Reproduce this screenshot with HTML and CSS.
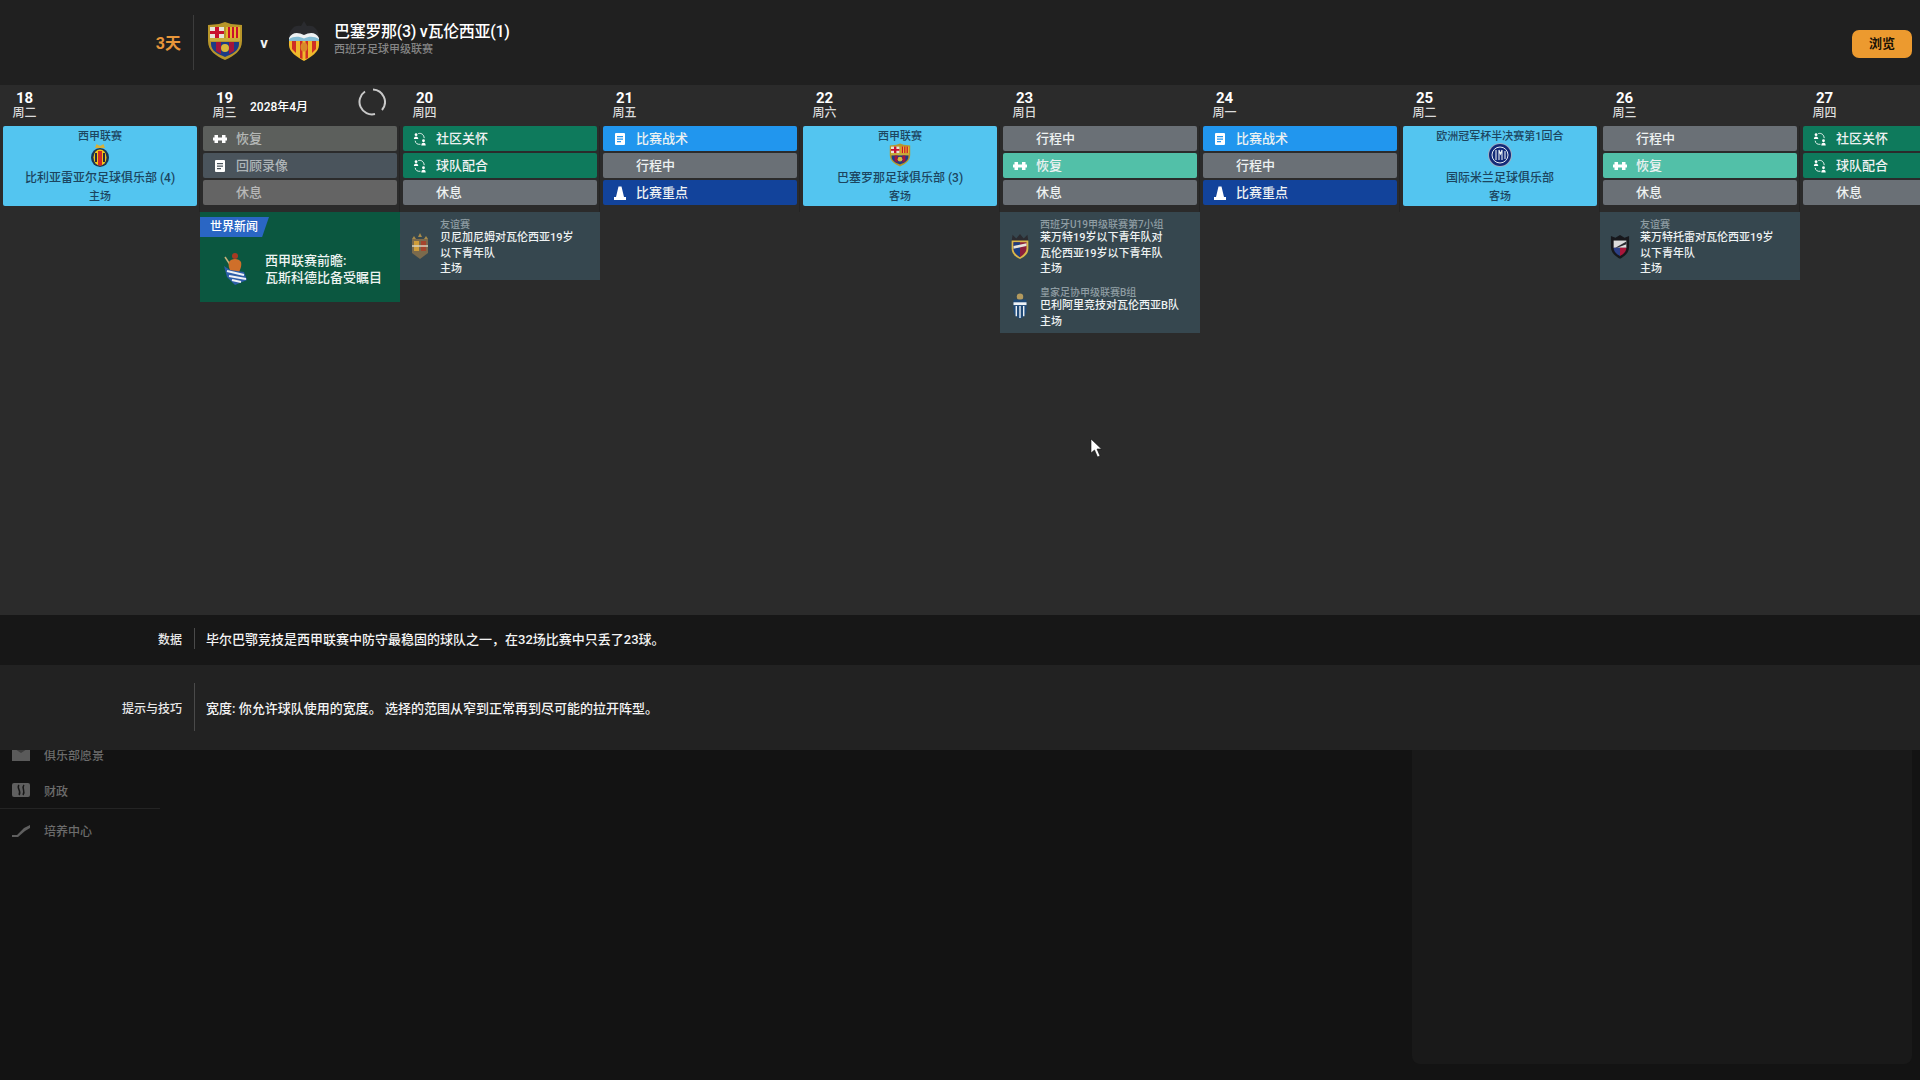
FILE: index.html
```html
<!DOCTYPE html>
<html lang="zh-CN">

<head>
	<meta charset="UTF-8">
	<title>日程</title>
	<link rel="stylesheet" href="styles.css">
</head>

<body>
	<svg class="sprite" xmlns="http://www.w3.org/2000/svg">
		<symbol id="barca" viewBox="0 0 36 40">
			<path d="M1 4 L12 3 L18 1 L24 3 L35 4 L35 20 C35 30 27 35 18 39 C9 35 1 30 1 20 Z" fill="#b8962a" />
			<path d="M3 6 H17 V17 H3 Z" fill="#e8e4da" />
			<path d="M8 6 H12 V17 H8 Z M3 10 H17 V13 H3 Z" fill="#c8102e" />
			<path d="M19 6 H33 V17 H19 Z" fill="#e7b62c" />
			<path d="M21 6 H23 V17 H21 Z M25 6 H27 V17 H25 Z M29 6 H31 V17 H29 Z" fill="#c8102e" />
			<path d="M3 17 H33 V20 H3 Z" fill="#c9ad3c" />
			<path d="M4 21 H32 V23 C32 30 25 33 18 36 C11 33 4 30 4 23 Z" fill="#1d3b85" />
			<path d="M9 21 H14 V33 L9 30 Z M22 21 H27 V30 L22 33 Z" fill="#a3143c" />
			<circle cx="18" cy="27" r="4" fill="#d9b93a" />
		</symbol>
		<symbol id="valencia" viewBox="0 0 32 40">
			<path d="M16 0 L13 5 C9 4 6 5 4 8 C2 10 1 13 1 17 H31 C31 13 30 10 28 8 C26 5 23 4 19 5 Z" fill="#2a2b2f" />
			<path d="M1 17 C4 11 10 11 16 14 C22 11 28 11 31 17 L31 19 H1 Z" fill="#eef1f3" />
			<path d="M1 18 C6 15 11 15 16 17.500 C21 15 26 15 31 18 L31 20 H1 Z" fill="#84bcd4" />
			<path d="M1 20 H31 V24 C31 31 23 36 16 40 C9 36 1 31 1 24 Z" fill="#f0b92c" />
			<path d="M4 20 H8 V32 L4 28 Z M12 20 H14.500 V38 L12 37 Z M17.500 20 H20 V37 L17.500 38 Z M24 20 H28 V28 L24 32 Z" fill="#cf2f25" />
			<ellipse cx="16" cy="26" rx="3.500" ry="4.500" fill="#d98a2b" />
		</symbol>
		<symbol id="villarreal" viewBox="0 0 18 24">
			<path d="M4 5 L5.500 1 L9 3 L12.500 1 L14 5 Z" fill="#d8b23a" />
			<ellipse cx="9" cy="14.500" rx="9" ry="9.500" fill="#1c3552" />
			<ellipse cx="9" cy="14.500" rx="6.500" ry="8" fill="#f2c418" />
			<path d="M7 8 H11 V22 L9 23 L7 22 Z" fill="#cf2a27" />
			<path d="M4 10 H6 V19 H4 Z M12 10 H14 V19 H12 Z" fill="#2a2a3e" />
		</symbol>
		<symbol id="inter" viewBox="0 0 24 24">
			<circle cx="12" cy="12" r="12" fill="#9fb0c4" />
			<circle cx="12" cy="12" r="11" fill="#142a78" />
			<circle cx="12" cy="12" r="8" fill="none" stroke="#e8edf4" stroke-width="1" />
			<path d="M8 7 V17 M11 7 V17 M14 7 V17 M17 8 V16 M11 7 L12.500 11 L14 7" fill="none" stroke="#e8edf4" stroke-width="1.100" />
		</symbol>
		<symbol id="sociedad" viewBox="0 0 26 34">
			<path d="M3 5 L19 29" stroke="#c9b27a" stroke-width="1.500" />
			<circle cx="13" cy="4" r="3" fill="#a63a22" />
			<path d="M7 10 C9 6 17 6 19 10 C20 14 18 18 17 20 H9 C7 17 6 13 7 10 Z" fill="#cf6f2a" />
			<path d="M2 14 L8 18 L22 20 L25 28 L13 33 L5 25 Z" fill="#2d5ea8" />
			<path d="M5 19 L22 23 M7 24 L24 27 M10 28 L19 30" stroke="#eef2f6" stroke-width="2" fill="none" />
		</symbol>
		<symbol id="ontinyent" viewBox="0 0 20 26">
			<path d="M10 0 L12 4 H8 Z M4 3 L6 6 H2 Z M16 3 L18 6 H14 Z" fill="#a88b4a" />
			<path d="M2 6 H18 V20 L10 26 L2 20 Z" fill="#7b6a4c" />
			<path d="M4 8 H9 V18 H4 Z" fill="#cf9d3a" />
			<path d="M11 8 H16 V18 H11 Z" fill="#a5452d" />
			<path d="M2 13 H18" stroke="#d9d2bd" stroke-width="1.500" />
		</symbol>
		<symbol id="levante" viewBox="0 0 20 28">
			<path d="M2 2 L6 6 L10 1 L14 6 L18 2 L19 9 H1 Z" fill="#2b2b30" />
			<path d="M1 8 H19 V17 C19 23 14 26 10 28 C6 26 1 23 1 17 Z" fill="#d9b84a" />
			<path d="M3 10 H17 V17 C17 21 13 24 10 26 C7 24 3 21 3 17 Z" fill="#8c1f3c" />
			<path d="M3 10 H10 V26 C7 24 3 21 3 17 Z" fill="#1c3e7e" />
			<path d="M3 14 L17 11 V14 L3 17 Z" fill="#e8e4da" />
		</symbol>
		<symbol id="baleares" viewBox="0 0 16 28">
			<circle cx="8" cy="4" r="3.500" fill="#b39a5e" />
			<path d="M1 7 H15 V19 C15 24 11 26 8 28 C5 26 1 24 1 19 Z" fill="#1f4a78" />
			<path d="M1 10 H15 V13 H1 Z" fill="#eef2f6" />
			<path d="M4 14 V25 M8 14 V27 M12 14 V25" stroke="#eef2f6" stroke-width="1.500" />
		</symbol>
		<symbol id="huesca" viewBox="0 0 22 28">
			<path d="M1 3 L6 5 L11 2 L16 5 L21 3 V15 C21 22 15 26 11 28 C7 26 1 22 1 15 Z" fill="#17181c" />
			<path d="M4 8 H18 V16 H4 Z" fill="#dcdcdc" />
			<path d="M6 16 L18 9 V12 L8 16 Z" fill="#2a2a30" />
			<path d="M4 16 H11 V25 C7 23 4 20 4 16 Z" fill="#2c3f86" />
			<path d="M11 16 H18 C18 20 15 23 11 25 Z" fill="#a8163a" />
		</symbol>
		<symbol id="ic-rest" viewBox="0 0 14 14">
			<path d="M0 5.500 H1.500 V3 H5 V5.500 H9 V3 H12.500 V5.500 H14 V8.500 H12.500 V11 H9 V8.500 H5 V11 H1.500 V8.500 H0 Z" fill="currentColor" />
		</symbol>
		<symbol id="ic-doc" viewBox="0 0 14 14">
			<path fill-rule="evenodd" d="M3 1 H11 A1 1 0 0 1 12 2 V12 A1 1 0 0 1 11 13 H3 A1 1 0 0 1 2 12 V2 A1 1 0 0 1 3 1 Z M4 4 V5.200 H10 V4 Z M4 6.500 V7.700 H10 V6.500 Z M4 9 V10.200 H8 V9 Z" fill="currentColor" />
		</symbol>
		<symbol id="ic-cone" viewBox="0 0 14 14">
			<path d="M5.500 0.500 H8.500 L11 11 H13 V14 H1 V11 H3 Z" fill="currentColor" />
		</symbol>
		<symbol id="ic-team" viewBox="0 0 16 16">
			<circle cx="3.500" cy="3" r="1.600" fill="currentColor" />
			<path d="M1 8 C1 6 2 5 3.500 5 C5 5 6 6 6 8 Z" fill="currentColor" />
			<circle cx="12" cy="10" r="1.600" fill="currentColor" />
			<path d="M9.500 15.500 C9.500 13 10.500 12.300 12 12.300 C13.500 12.300 14.500 13 14.500 15.500 Z" fill="currentColor" />
			<path d="M6 1.800 C9.500 0.800 12.500 3 12.800 7 M8.500 14 C5 14.500 2.800 13 2.500 10" fill="none" stroke="currentColor" stroke-width="1" />
		</symbol>
	</svg>

	<header class="topbar">
		<span class="countdown">3天</span>
		<div class="divider"></div>
		<svg class="crest-big crest-barca"><use href="#barca" /></svg>
		<span class="versus">v</span>
		<svg class="crest-big crest-vcf"><use href="#valencia" /></svg>
		<div class="fixture">
			<div class="fixture-name">巴塞罗那(3) v瓦伦西亚(1)</div>
			<div class="fixture-comp">西班牙足球甲级联赛</div>
		</div>
		<button class="browse">浏览</button>
	</header>

	<section class="schedule">
		<div class="day">
			<div class="day-head">
				<div class="date"><b>18</b><span>周二</span></div>
			</div>
			<div class="stack">
				<div class="match">
					<div class="match-comp">西甲联赛</div>
					<svg class="crest-small"><use href="#villarreal" /></svg>
					<div class="match-team">比利亚雷亚尔足球俱乐部 (4)</div>
					<div class="match-venue">主场</div>
				</div>
			</div>
		</div>

		<div class="day">
			<div class="day-head">
				<div class="date"><b>19</b><span>周三</span></div>
				<div class="month">2028年4月</div>
				<svg class="spinner" viewBox="0 0 28 28">
					<path d="M15 1.500 A12.500 12.500 0 0 1 24 22" fill="none" stroke="#c9c9c9" stroke-width="2" />
					<path d="M17 26 A12.500 12.500 0 0 1 7 3.500" fill="none" stroke="#c9c9c9" stroke-width="2" />
				</svg>
			</div>
			<div class="stack">
				<div class="row dim-rest"><svg class="ic"><use href="#ic-rest" /></svg><span>恢复</span></div>
				<div class="row dim-video"><svg class="ic"><use href="#ic-doc" /></svg><span>回顾录像</span></div>
				<div class="row dim-off"><span class="ic"></span><span>休息</span></div>
			</div>
			<div class="news">
				<div class="news-tag">世界新闻</div>
				<div class="news-body">
					<svg class="crest-news"><use href="#sociedad" /></svg>
					<div>西甲联赛前瞻:<br>瓦斯科德比备受瞩目</div>
				</div>
			</div>
		</div>

		<div class="day">
			<div class="day-head">
				<div class="date"><b>20</b><span>周四</span></div>
			</div>
			<div class="stack">
				<div class="row green"><svg class="ic"><use href="#ic-team" /></svg><span>社区关怀</span></div>
				<div class="row green"><svg class="ic"><use href="#ic-team" /></svg><span>球队配合</span></div>
				<div class="row grey"><span class="ic"></span><span>休息</span></div>
			</div>
			<div class="events">
				<div class="event">
					<svg class="crest-ev"><use href="#ontinyent" /></svg>
					<div class="event-text">
						<div class="event-comp">友谊赛</div>
						<div>贝尼加尼姆对瓦伦西亚19岁<br>以下青年队</div>
						<div>主场</div>
					</div>
				</div>
			</div>
		</div>

		<div class="day">
			<div class="day-head">
				<div class="date"><b>21</b><span>周五</span></div>
			</div>
			<div class="stack">
				<div class="row blue"><svg class="ic"><use href="#ic-doc" /></svg><span>比赛战术</span></div>
				<div class="row grey"><span class="ic"></span><span>行程中</span></div>
				<div class="row navy"><svg class="ic"><use href="#ic-cone" /></svg><span>比赛重点</span></div>
			</div>
		</div>

		<div class="day">
			<div class="day-head">
				<div class="date"><b>22</b><span>周六</span></div>
			</div>
			<div class="stack">
				<div class="match">
					<div class="match-comp">西甲联赛</div>
					<svg class="crest-small"><use href="#barca" /></svg>
					<div class="match-team">巴塞罗那足球俱乐部 (3)</div>
					<div class="match-venue">客场</div>
				</div>
			</div>
		</div>

		<div class="day">
			<div class="day-head">
				<div class="date"><b>23</b><span>周日</span></div>
			</div>
			<div class="stack">
				<div class="row grey"><span class="ic"></span><span>行程中</span></div>
				<div class="row teal"><svg class="ic"><use href="#ic-rest" /></svg><span>恢复</span></div>
				<div class="row grey"><span class="ic"></span><span>休息</span></div>
			</div>
			<div class="events">
				<div class="event">
					<svg class="crest-ev"><use href="#levante" /></svg>
					<div class="event-text">
						<div class="event-comp">西班牙U19甲级联赛第7小组</div>
						<div>莱万特19岁以下青年队对<br>瓦伦西亚19岁以下青年队</div>
						<div>主场</div>
					</div>
				</div>
				<div class="event">
					<svg class="crest-ev"><use href="#baleares" /></svg>
					<div class="event-text">
						<div class="event-comp">皇家足协甲级联赛B组</div>
						<div>巴利阿里竞技对瓦伦西亚B队</div>
						<div>主场</div>
					</div>
				</div>
			</div>
		</div>

		<div class="day">
			<div class="day-head">
				<div class="date"><b>24</b><span>周一</span></div>
			</div>
			<div class="stack">
				<div class="row blue"><svg class="ic"><use href="#ic-doc" /></svg><span>比赛战术</span></div>
				<div class="row grey"><span class="ic"></span><span>行程中</span></div>
				<div class="row navy"><svg class="ic"><use href="#ic-cone" /></svg><span>比赛重点</span></div>
			</div>
		</div>

		<div class="day">
			<div class="day-head">
				<div class="date"><b>25</b><span>周二</span></div>
			</div>
			<div class="stack">
				<div class="match">
					<div class="match-comp">欧洲冠军杯半决赛第1回合</div>
					<svg class="crest-small"><use href="#inter" /></svg>
					<div class="match-team">国际米兰足球俱乐部</div>
					<div class="match-venue">客场</div>
				</div>
			</div>
		</div>

		<div class="day">
			<div class="day-head">
				<div class="date"><b>26</b><span>周三</span></div>
			</div>
			<div class="stack">
				<div class="row grey"><span class="ic"></span><span>行程中</span></div>
				<div class="row teal"><svg class="ic"><use href="#ic-rest" /></svg><span>恢复</span></div>
				<div class="row grey"><span class="ic"></span><span>休息</span></div>
			</div>
			<div class="events">
				<div class="event">
					<svg class="crest-ev"><use href="#huesca" /></svg>
					<div class="event-text">
						<div class="event-comp">友谊赛</div>
						<div>莱万特托雷对瓦伦西亚19岁<br>以下青年队</div>
						<div>主场</div>
					</div>
				</div>
			</div>
		</div>

		<div class="day">
			<div class="day-head">
				<div class="date"><b>27</b><span>周四</span></div>
			</div>
			<div class="stack">
				<div class="row green"><svg class="ic"><use href="#ic-team" /></svg><span>社区关怀</span></div>
				<div class="row green"><svg class="ic"><use href="#ic-team" /></svg><span>球队配合</span></div>
				<div class="row grey"><span class="ic"></span><span>休息</span></div>
			</div>
		</div>
	</section>

	<section class="band band-stat">
		<div class="band-label">数据</div>
		<div class="band-text">毕尔巴鄂竞技是西甲联赛中防守最稳固的球队之一，在32场比赛中只丢了23球。</div>
	</section>
	<section class="band band-tip">
		<div class="band-label">提示与技巧</div>
		<div class="band-text">宽度: 你允许球队使用的宽度。 选择的范围从窄到正常再到尽可能的拉开阵型。</div>
	</section>

	<section class="lower">
		<nav class="side">
			<div class="side-item side-cut">
				<svg class="side-ic" viewBox="0 0 18 14"><path d="M0 0 H18 V14 H0 Z" fill="#5a5a5a" /><path d="M0 0 L9 6 L18 0" fill="#3c3c3c" /></svg>
				<span>俱乐部愿景</span>
			</div>
			<div class="side-item">
				<svg class="side-ic" viewBox="0 0 18 14"><rect width="18" height="14" rx="2" fill="#5f5f5f" /><path d="M7 2 C4 5 10 8 7 12 M12 2 C9 5 14 8 11 12" stroke="#161616" stroke-width="1.500" fill="none" /></svg>
				<span>财政</span>
			</div>
			<div class="side-line"></div>
			<div class="side-item">
				<svg class="side-ic" viewBox="0 0 18 14"><path d="M0 12 H5 L12 5 L18 2 V5 L13 8 L6 14 H0 Z" fill="#5f5f5f" /></svg>
				<span>培养中心</span>
			</div>
		</nav>
		<div class="panel"></div>
	</section>

	<svg class="cursor" viewBox="0 0 12 20"><path d="M1 1 V15 L4.500 12 L7.500 19 L10 18 L7 11 L11.500 11 Z" fill="#fff" stroke="#111" stroke-width="0.600" /></svg>
</body>

</html>
```

FILE: styles.css
```css
* {
	box-sizing: border-box;
}

body {
	margin: 0;
	width: 1920px;
	height: 1080px;
	overflow: hidden;
	position: relative;
	background-color: #131313;
	color: #f0f2f2;
	font: 500 13px Roboto, 'Noto Sans CJK SC', sans-serif;
}

.sprite {
	display: none;
}

/* top bar */
.topbar {
	height: 85px;
	display: flex;
	align-items: center;
	background-color: #202020;
}

.countdown {
	width: 181px;
	margin-bottom: 2px;
	text-align: right;
	color: #e8963a;
	font-size: 16px;
	font-weight: 700;
}

.divider {
	width: 1px;
	height: 55px;
	margin-left: 12px;
	background-color: #3c3c3c;
}

.crest-big {
	height: 40px;
	margin-bottom: 3px;
}

.crest-barca {
	width: 36px;
	margin-left: 13px;
}

.versus {
	width: 42px;
	text-align: center;
	font-size: 15px;
	font-weight: 700;
}

.crest-vcf {
	width: 32px;
	margin-left: 3px;
}

.fixture {
	margin-left: 14px;
	margin-bottom: 8px;
}

.fixture-name {
	font-size: 16px;
	line-height: 23px;
	letter-spacing: -0.3px;
	color: #fff;
}

.fixture-comp {
	font-size: 11px;
	line-height: 14px;
	color: #858585;
}

.browse {
	width: 60px;
	height: 28px;
	margin-left: auto;
	margin-right: 8px;
	margin-top: 3px;
	padding: 0 0 3px;
	border: 0;
	border-radius: 7px;
	background-color: #ec9a2f;
	color: #1a1206;
	font: 700 13px Roboto, 'Noto Sans CJK SC', sans-serif;
}

/* calendar */
.schedule {
	height: 530px;
	display: flex;
	overflow: hidden;
	background-color: #2b2b2b;
}

.day {
	flex: 0 0 200px;
}

.day-head {
	height: 41px;
	display: flex;
	align-items: flex-start;
}

.date {
	width: 49px;
	padding-top: 5px;
	text-align: center;
}

.date b {
	display: block;
	font-size: 15px;
	line-height: 16px;
	font-weight: 700;
	color: #fff;
}

.date span {
	display: block;
	font-size: 12px;
	line-height: 14px;
	color: #dcdcdc;
}

.month {
	margin-left: 1px;
	padding-top: 15px;
	font-size: 12px;
	line-height: 15px;
	color: #fff;
}

.spinner {
	width: 28px;
	height: 28px;
	margin-left: auto;
	margin-right: 14px;
	margin-top: 3px;
}

.stack {
	height: 86px;
	padding: 0 2px 0 3px;
	display: flex;
	flex-direction: column;
	gap: 2px;
	border-right: 1px solid #242424;
}

.row {
	height: 25px;
	flex: none;
	display: flex;
	align-items: center;
	padding-bottom: 2px;
	border-radius: 2px;
	font-size: 13px;
	color: #eef2f2;
}

.ic {
	width: 14px;
	height: 14px;
	margin-left: 10px;
	margin-right: 9px;
	margin-top: 2px;
	color: #fff;
}

.green {
	background-color: #0e7a5c;
}

.grey {
	background-color: #6a7076;
}

.blue {
	background-color: #2196ee;
}

.navy {
	background-color: #12439b;
}

.teal {
	background-color: #52c0a8;
}

.dim-rest {
	background-color: #5c5f5c;
	color: #b5b9b7;
}

.dim-video {
	background-color: #4a545c;
	color: #aeb4b8;
}

.dim-off {
	background-color: #646464;
	color: #b8b8b8;
}

.match {
	height: 80px;
	flex: none;
	display: flex;
	flex-direction: column;
	align-items: center;
	border-radius: 2px;
	background-color: #53c5f0;
	color: #1c4560;
	text-align: center;
}

.match-comp {
	font-size: 11px;
	line-height: 11px;
	margin-top: 5px;
}

.crest-small {
	width: 24px;
	height: 24px;
	margin-top: 1px;
}

.match-team {
	font-size: 12px;
	line-height: 16px;
	margin-top: 3px;
}

.match-venue {
	font-size: 11px;
	line-height: 14px;
	margin-top: 4px;
}

.news {
	height: 90px;
	background-color: #0b5740;
	padding-top: 5px;
}

.news-tag {
	width: 69px;
	height: 20px;
	padding-left: 10px;
	line-height: 20px;
	font-size: 12px;
	color: #fff;
	background-color: #2a66c4;
	clip-path: polygon(0 0, 100% 0, 90% 100%, 0 100%);
}

.news-body {
	display: flex;
	align-items: center;
	margin-top: 15px;
	font-size: 13px;
	line-height: 17px;
	color: #eef4f2;
}

.crest-news {
	width: 26px;
	height: 34px;
	margin-left: 22px;
	margin-right: 17px;
}

.events {
	background-color: #36474f;
}

.event {
	display: flex;
	align-items: center;
}

.crest-ev {
	width: 20px;
	height: 26px;
	margin-left: 10px;
	margin-right: 10px;
	flex: none;
}

.event-text {
	padding: 7px 0 3.500px;
	font-size: 11px;
	line-height: 15.500px;
	color: #eef2f2;
}

.event-comp {
	font-size: 10px;
	line-height: 11px;
	color: #8f9da3;
}

/* info bands */
.band {
	display: flex;
	align-items: center;
	font-size: 13px;
}

.band-stat {
	height: 50px;
	padding-bottom: 3px;
	background-color: #171717;
}

.band-tip {
	height: 85px;
	padding-bottom: 1px;
	background-color: #222;
}

.band-label {
	width: 195px;
	padding-right: 12px;
	text-align: right;
	font-size: 12px;
	align-self: stretch;
	display: flex;
	align-items: center;
	justify-content: flex-end;
	margin: 13px 0;
	border-right: 1px solid #4a4a4a;
	color: #e8e8e8;
}

.band-tip .band-label {
	margin: 18px 0;
}

.band-text {
	padding-left: 11px;
	color: #f4f4f4;
}

/* what is left of the screen behind */
.lower {
	height: 330px;
	display: flex;
	overflow: hidden;
}

.side {
	width: 160px;
	color: #6c6c6c;
	font-size: 12px;
}

.side-item {
	height: 36px;
	display: flex;
	align-items: center;
	padding-left: 12px;
}

.side-cut {
	margin-top: -14px;
}

.side-ic {
	width: 18px;
	height: 14px;
	margin-right: 14px;
}

.side-line {
	height: 1px;
	margin-bottom: 3px;
	background-color: #242424;
}

.panel {
	width: 500px;
	height: 314px;
	margin-left: auto;
	margin-right: 8px;
	background-color: #191919;
	border-radius: 0 0 8px 8px;
}

.cursor {
	position: absolute;
	left: 1090px;
	top: 438px;
	width: 12px;
	height: 20px;
}
```
